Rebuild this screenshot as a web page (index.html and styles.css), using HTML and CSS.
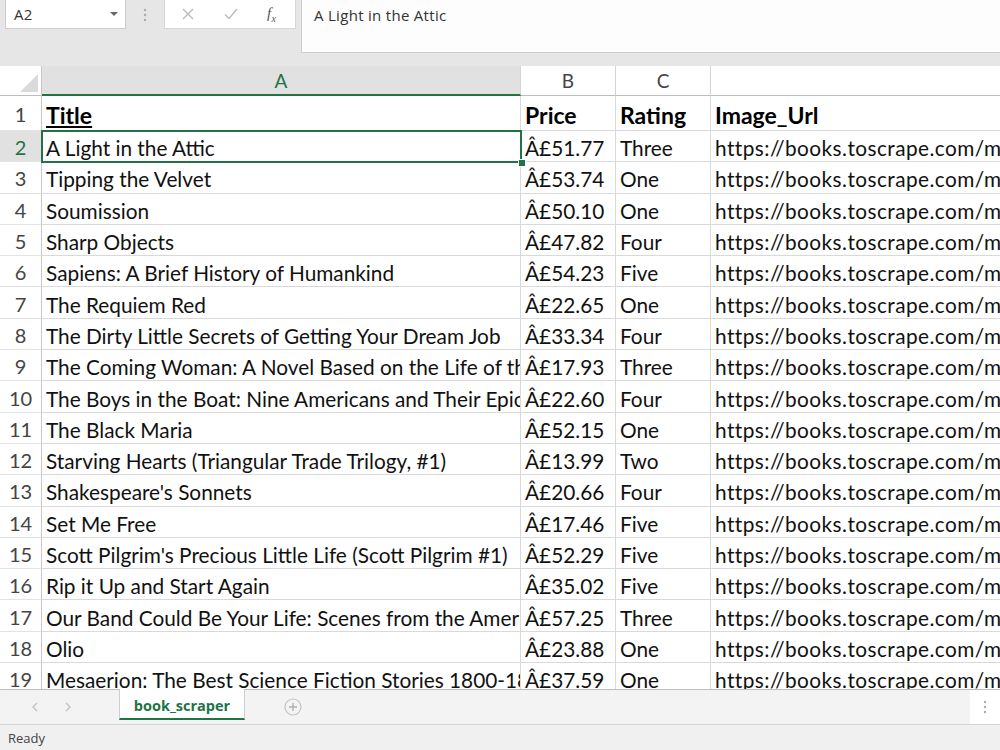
FILE: index.html
```html
<!DOCTYPE html>
<html>
<head>
    <title>book_scraper - Excel</title>
    <link rel="stylesheet" href="styles.css">
</head>
<body>
    <div class="formula-bar">
        <div class="name-box">
            <span>A2</span>
            <svg width="10" height="6" viewBox="0 0 10 6"><path d="M1 1h8L5 5z" fill="#666"/></svg>
        </div>
        <div class="bar-dots">
            <svg width="4" height="14" viewBox="0 0 4 14"><circle cx="2" cy="2" r="1.2" fill="#aaa"/><circle cx="2" cy="7" r="1.2" fill="#aaa"/><circle cx="2" cy="12" r="1.2" fill="#aaa"/></svg>
        </div>
        <div class="fx-box">
            <svg width="14" height="14" viewBox="0 0 14 14"><path d="M2 2l10 10M12 2L2 12" stroke="#bbb" stroke-width="1.4"/></svg>
            <svg width="16" height="14" viewBox="0 0 16 14"><path d="M2 7.5l4 4L14 2" stroke="#bbb" stroke-width="1.4" fill="none"/></svg>
            <span class="fx">f<sub>x</sub></span>
        </div>
        <div class="formula">A Light in the Attic</div>
    </div>

    <div class="sheet">
        <div class="row col-head">
            <div class="corner"><span class="corner-tri"></span></div>
            <div class="ch active">A</div>
            <div class="ch">B</div>
            <div class="ch">C</div>
            <div class="ch"></div>
        </div>

        <div class="rows">
            <div class="row head-row">
                <div class="rh">1</div>
                <div class="c"><u>Title</u></div>
                <div class="c">Price</div>
                <div class="c">Rating</div>
                <div class="c">Image_Url</div>
            </div>
            <div class="row">
                <div class="rh active">2</div>
                <div class="c">A Light in the Attic</div>
                <div class="c">Â£51.77</div>
                <div class="c">Three</div>
                <div class="c url">https://books.toscrape.com/media/cache/2c/da/2cdad67c44b002e7ead0cc35693c0e8b.jpg</div>
            </div>
            <div class="row">
                <div class="rh">3</div>
                <div class="c">Tipping the Velvet</div>
                <div class="c">Â£53.74</div>
                <div class="c">One</div>
                <div class="c url">https://books.toscrape.com/media/cache/26/0c/260c6ae16bce31c8f8c95daddd9f4a1c.jpg</div>
            </div>
            <div class="row">
                <div class="rh">4</div>
                <div class="c">Soumission</div>
                <div class="c">Â£50.10</div>
                <div class="c">One</div>
                <div class="c url">https://books.toscrape.com/media/cache/3e/ef/3eef99c9d9adef34639f510662022830.jpg</div>
            </div>
            <div class="row">
                <div class="rh">5</div>
                <div class="c">Sharp Objects</div>
                <div class="c">Â£47.82</div>
                <div class="c">Four</div>
                <div class="c url">https://books.toscrape.com/media/cache/32/51/3251cf3a3412f53f339e42cac2134093.jpg</div>
            </div>
            <div class="row">
                <div class="rh">6</div>
                <div class="c">Sapiens: A Brief History of Humankind</div>
                <div class="c">Â£54.23</div>
                <div class="c">Five</div>
                <div class="c url">https://books.toscrape.com/media/cache/be/a5/bea5697f2534a2f86a3ef27b5a8c12a6.jpg</div>
            </div>
            <div class="row">
                <div class="rh">7</div>
                <div class="c">The Requiem Red</div>
                <div class="c">Â£22.65</div>
                <div class="c">One</div>
                <div class="c url">https://books.toscrape.com/media/cache/68/33/68339b4c9bc034267e1da611ab3b34f8.jpg</div>
            </div>
            <div class="row">
                <div class="rh">8</div>
                <div class="c">The Dirty Little Secrets of Getting Your Dream Job</div>
                <div class="c">Â£33.34</div>
                <div class="c">Four</div>
                <div class="c url">https://books.toscrape.com/media/cache/92/27/92274a95b7c251fea59a2b8a78275ab4.jpg</div>
            </div>
            <div class="row">
                <div class="rh">9</div>
                <div class="c">The Coming Woman: A Novel Based on the Life of the Infamous Feminist, Victoria Woodhull</div>
                <div class="c">Â£17.93</div>
                <div class="c">Three</div>
                <div class="c url">https://books.toscrape.com/media/cache/3d/54/3d54940e57e662c4dd1f3ff00c78cc64.jpg</div>
            </div>
            <div class="row">
                <div class="rh">10</div>
                <div class="c">The Boys in the Boat: Nine Americans and Their Epic Quest for Gold at the 1936 Berlin Olympics</div>
                <div class="c">Â£22.60</div>
                <div class="c">Four</div>
                <div class="c url">https://books.toscrape.com/media/cache/66/88/66883b91f6804b2323c8369331cb7dd1.jpg</div>
            </div>
            <div class="row">
                <div class="rh">11</div>
                <div class="c">The Black Maria</div>
                <div class="c">Â£52.15</div>
                <div class="c">One</div>
                <div class="c url">https://books.toscrape.com/media/cache/58/46/5846057e28022268153beff6d352b06c.jpg</div>
            </div>
            <div class="row">
                <div class="rh">12</div>
                <div class="c">Starving Hearts (Triangular Trade Trilogy, #1)</div>
                <div class="c">Â£13.99</div>
                <div class="c">Two</div>
                <div class="c url">https://books.toscrape.com/media/cache/be/f4/bef44da28c98f905a3ebec0b87be8530.jpg</div>
            </div>
            <div class="row">
                <div class="rh">13</div>
                <div class="c">Shakespeare's Sonnets</div>
                <div class="c">Â£20.66</div>
                <div class="c">Four</div>
                <div class="c url">https://books.toscrape.com/media/cache/10/48/1048f63d3b5061cd2f424d20b3f9b666.jpg</div>
            </div>
            <div class="row">
                <div class="rh">14</div>
                <div class="c">Set Me Free</div>
                <div class="c">Â£17.46</div>
                <div class="c">Five</div>
                <div class="c url">https://books.toscrape.com/media/cache/5b/88/5b88c52633f53cacf162c15f4f823153.jpg</div>
            </div>
            <div class="row">
                <div class="rh">15</div>
                <div class="c">Scott Pilgrim's Precious Little Life (Scott Pilgrim #1)</div>
                <div class="c">Â£52.29</div>
                <div class="c">Five</div>
                <div class="c url">https://books.toscrape.com/media/cache/94/b1/94b1b8b244bce9677c2f29ccc890d4d2.jpg</div>
            </div>
            <div class="row">
                <div class="rh">16</div>
                <div class="c">Rip it Up and Start Again</div>
                <div class="c">Â£35.02</div>
                <div class="c">Five</div>
                <div class="c url">https://books.toscrape.com/media/cache/81/c4/81c4a973364e17d01f217e1188253d5e.jpg</div>
            </div>
            <div class="row">
                <div class="rh">17</div>
                <div class="c">Our Band Could Be Your Life: Scenes from the American Indie Underground, 1981-1991</div>
                <div class="c">Â£57.25</div>
                <div class="c">Three</div>
                <div class="c url">https://books.toscrape.com/media/cache/54/60/54607fe8945897cdcced0044103b10b6.jpg</div>
            </div>
            <div class="row">
                <div class="rh">18</div>
                <div class="c">Olio</div>
                <div class="c">Â£23.88</div>
                <div class="c">One</div>
                <div class="c url">https://books.toscrape.com/media/cache/55/33/553310a7162dfbc2c6d19a84da0df9e1.jpg</div>
            </div>
            <div class="row">
                <div class="rh">19</div>
                <div class="c">Mesaerion: The Best Science Fiction Stories 1800-1849</div>
                <div class="c">Â£37.59</div>
                <div class="c">One</div>
                <div class="c url">https://books.toscrape.com/media/cache/09/a3/09a3aef48557576e1a85ba7efea8ecb7.jpg</div>
            </div>

            <div class="selection"><span class="fill-handle"></span></div>
        </div>
    </div>

    <div class="tab-bar">
        <div class="tab-nav">
            <svg width="8" height="10" viewBox="0 0 8 10"><path d="M6 1L2 5l4 4" stroke="#c4c4c4" stroke-width="1.5" fill="none"/></svg>
            <svg width="8" height="10" viewBox="0 0 8 10"><path d="M2 1l4 4-4 4" stroke="#c4c4c4" stroke-width="1.5" fill="none"/></svg>
        </div>
        <div class="sheet-tab">book_scraper</div>
        <div class="add-sheet">
            <svg width="18" height="18" viewBox="0 0 18 18"><circle cx="9" cy="9" r="8" stroke="#c4c4c4" stroke-width="1.2" fill="none"/><path d="M9 5v8M5 9h8" stroke="#b0b0b0" stroke-width="1.4"/></svg>
        </div>
        <div class="tab-end">
            <svg width="4" height="14" viewBox="0 0 4 14"><circle cx="2" cy="2" r="1.2" fill="#aaa"/><circle cx="2" cy="7" r="1.2" fill="#aaa"/><circle cx="2" cy="12" r="1.2" fill="#aaa"/></svg>
        </div>
    </div>

    <div class="status-bar">Ready</div>
</body>
</html>
```

FILE: styles.css
```css
body {
    margin: 0;
    width: 1000px;
    height: 750px;
    overflow: hidden;
    font-family: Lato, "Open Sans", sans-serif;
    background-color: #ffffff;
}

/* top formula bar */
.formula-bar {
    display: flex;
    align-items: flex-start;
    height: 66px;
    background-color: #e6e6e6;
    font-family: "Open Sans", sans-serif;
    font-size: 15px;
    letter-spacing: 0.3px;
    color: #333;
}

.name-box {
    box-sizing: border-box;
    display: flex;
    align-items: center;
    justify-content: space-between;
    width: 121px;
    height: 30px;
    margin: -1px 0 0 5px;
    padding: 0 6px 0 8px;
    background-color: #fff;
    border: 1px solid #cdcdcd;
}

.bar-dots {
    display: flex;
    align-items: center;
    justify-content: center;
    width: 38px;
    height: 29px;
}

.fx-box {
    box-sizing: border-box;
    display: flex;
    align-items: center;
    gap: 28px;
    width: 132px;
    height: 30px;
    margin-top: -1px;
    padding-left: 16px;
    background-color: #fff;
    border: 1px solid #d6d6d6;
}

.fx {
    font-family: "Liberation Serif", serif;
    font-style: italic;
    font-size: 15px;
    color: #555;
}

.fx sub {
    font-size: 10px;
}

.formula {
    box-sizing: border-box;
    flex: 1;
    height: 54px;
    margin: -1px 0 0 5px;
    padding: 5px 12px;
    background-color: #fdfdfd;
    border: 1px solid #cdcdcd;
    border-right: none;
}

/* grid */
.sheet {
    height: 623px;
    overflow: hidden;
}

.row {
    display: grid;
    grid-template-columns: 42px 479px 95px 95px 620px;
    height: 31.3px;
}

.col-head {
    height: 30px;
}

.head-row {
    height: 35px;
}

.corner {
    position: relative;
    box-sizing: border-box;
    background-color: #fff;
    border-right: 1px solid #c8c8c8;
    border-bottom: 1px solid #bdbdbd;
}

.corner-tri {
    position: absolute;
    right: 3px;
    bottom: 3px;
    width: 0;
    height: 0;
    border-left: 18px solid transparent;
    border-bottom: 18px solid #dadada;
}

.ch {
    box-sizing: border-box;
    display: flex;
    align-items: center;
    justify-content: center;
    background-color: #fff;
    border-right: 1px solid #d4d4d4;
    border-bottom: 1px solid #bdbdbd;
    font-size: 19px;
    color: #444;
}

.ch.active {
    background-color: #e1e1e1;
    color: #217346;
    border-bottom: 2px solid #217346;
}

.rows {
    position: relative;
}

.rh {
    box-sizing: border-box;
    display: flex;
    align-items: center;
    justify-content: center;
    padding-top: 2px;
    background-color: #fff;
    border-right: 1px solid #c8c8c8;
    border-bottom: 1px solid #e3e3e3;
    font-size: 20px;
    color: #444;
}

.rh.active {
    background-color: #e1e1e1;
    color: #217346;
}

.c {
    box-sizing: border-box;
    display: flex;
    align-items: center;
    padding: 3px 4px 0;
    overflow: hidden;
    white-space: nowrap;
    text-overflow: clip;
    border-right: 1px solid #d9d9d9;
    border-bottom: 1px solid #d9d9d9;
    font-size: 20.8px;
    color: #111;
}

.url {
    letter-spacing: 0.45px;
}

.head-row .c {
    font-size: 23px;
    font-weight: bold;
    color: #000;
}

.selection {
    position: absolute;
    left: 41px;
    top: 34px;
    width: 477px;
    height: 29.3px;
    border: 2px solid #217346;
    pointer-events: none;
}

.fill-handle {
    position: absolute;
    right: -6px;
    bottom: -6px;
    width: 6px;
    height: 6px;
    background-color: #217346;
    border: 1px solid #fff;
}

/* sheet tabs */
.tab-bar {
    box-sizing: border-box;
    display: flex;
    height: 35px;
    background-color: #f3f3f3;
    border-top: 1px solid #bdbdbd;
}

.tab-nav {
    display: flex;
    align-items: center;
    gap: 25px;
    width: 119px;
    padding-left: 31px;
    box-sizing: border-box;
}

.sheet-tab {
    box-sizing: border-box;
    display: flex;
    align-items: center;
    justify-content: center;
    width: 126px;
    height: 31px;
    margin-top: -1px;
    padding-top: 3px;
    background-color: #fff;
    border-left: 1px solid #cfcfcf;
    border-right: 1px solid #cfcfcf;
    border-bottom: 2px solid #217346;
    font-family: "Open Sans", sans-serif;
    font-size: 14.5px;
    font-weight: bold;
    color: #217346;
}

.add-sheet {
    display: flex;
    align-items: center;
    margin-left: 39px;
}

.tab-end {
    display: flex;
    align-items: center;
    justify-content: center;
    width: 30px;
    margin-left: auto;
    background-color: #fff;
}

.status-bar {
    box-sizing: border-box;
    height: 26px;
    padding: 4px 8px;
    background-color: #f0f0f0;
    border-top: 1px solid #d6d6d6;
    font-family: "Open Sans", sans-serif;
    font-size: 13px;
    color: #444;
}
```
